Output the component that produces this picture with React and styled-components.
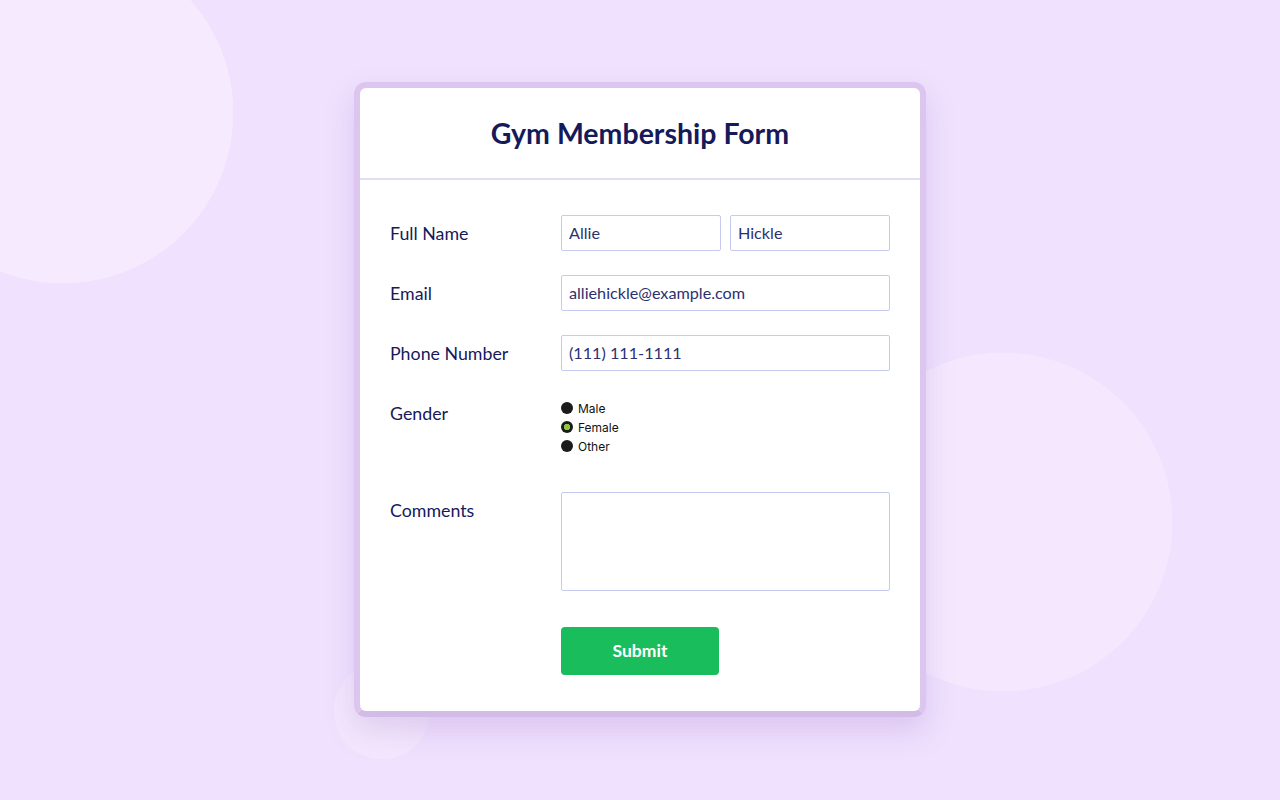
import styled, { createGlobalStyle } from 'styled-components';
import { useState } from 'react';

const GlobalStyle = createGlobalStyle`
    * {
        box-sizing: border-box;
    }

    body {
        margin: 0;
        font-family: "Lato", "Liberation Sans", sans-serif;
        background-color: #f0e1fe;
    }
`

const App = () => {
    const [form, setForm] = useState({
        first: 'Allie',
        last: 'Hickle',
        email: 'alliehickle@example.com',
        phone: '(111) 111-1111',
        gender: 'Female',
        comments: '',
    });

    const update = (key) => (e) => setForm({ ...form, [key]: e.target.value });

    return (
        <Page>
            <GlobalStyle />
            <Card>
                <Header>
                    <h1>Gym Membership Form</h1>
                </Header>
                <Form onSubmit={(e) => e.preventDefault()}>
                    <Label>Full Name</Label>
                    <Pair>
                        <Input value={form.first} onChange={update('first')} />
                        <Input value={form.last} onChange={update('last')} />
                    </Pair>

                    <Label>Email</Label>
                    <Input value={form.email} onChange={update('email')} />

                    <Label>Phone Number</Label>
                    <Input value={form.phone} onChange={update('phone')} />

                    <Label>Gender</Label>
                    <Radios>
                        {['Male', 'Female', 'Other'].map((g) => (
                            <RadioRow key={g}>
                                <Radio
                                    type="radio"
                                    name="gender"
                                    value={g}
                                    checked={form.gender === g}
                                    onChange={update('gender')}
                                />
                                {g}
                            </RadioRow>
                        ))}
                    </Radios>

                    <Label>Comments</Label>
                    <TextArea value={form.comments} onChange={update('comments')} />

                    <span />
                    <Submit type="submit">Submit</Submit>
                </Form>
            </Card>
        </Page>
    );
};

export default App;

const Page = styled.div`
    display: flex;
    align-items: center;
    justify-content: center;
    min-height: 100vh;
    padding-bottom: 2px;
    background:
        radial-gradient(circle at 382px 711px, #f6ecfd 0, #f3e6fd 48px, transparent 48.5px),
        radial-gradient(circle at 1003px 522px, #f5e8fe 169px, transparent 169.5px),
        radial-gradient(circle at 63px 113px, #f6eafe 170px, transparent 170.5px),
        #f0e1fe;
`

const Card = styled.div`
    width: 572px;
    background-color: #fff;
    border: 6px solid #dcc6f0;
    border-bottom-color: #d3bbe8;
    border-radius: 12px;
    box-shadow: 0 14px 28px rgba(160, 120, 200, 0.25);
    overflow: hidden;
`

const Header = styled.div`
    display: flex;
    align-items: center;
    justify-content: center;
    height: 92px;
    border-bottom: 2px solid #e0e0f4;

    h1 {
        margin: 0;
        font-size: 28.5px;
        font-weight: 700;
        color: #141a5a;
    }
`

const Form = styled.form`
    display: grid;
    grid-template-columns: 171px 1fr;
    row-gap: 24px;
    padding: 35px 30px 36px;
    align-items: start;
`

const Label = styled.label`
    line-height: 36px;
    font-size: 17.8px;
    color: #16195c;
`

const Pair = styled.div`
    display: grid;
    grid-template-columns: 1fr 1fr;
    gap: 9px;
`

const Input = styled.input`
    width: 100%;
    height: 36px;
    padding: 0 7px;
    border: 1px solid #c6caf0;
    border-radius: 2px;
    font-family: inherit;
    font-size: 16.2px;
    color: #2c316e;
    outline: none;
`

const Radios = styled.div`
    display: flex;
    flex-direction: column;
    padding: 4px 0 12px;
`

const RadioRow = styled.label`
    display: flex;
    align-items: center;
    gap: 5px;
    height: 19px;
    font-family: "Inter", "Liberation Sans", sans-serif;
    font-size: 12px;
    color: #111;
`

const Radio = styled.input`
    appearance: none;
    width: 12px;
    height: 12px;
    margin: 0;
    border-radius: 50%;
    background-color: #1b1b1b;

    &:checked {
        background: radial-gradient(circle, #8dc63f 0, #8dc63f 3px, #1b1b1b 3.5px);
    }
`

const TextArea = styled.textarea`
    width: 100%;
    height: 99px;
    border: 1px solid #c6caf0;
    border-radius: 2px;
    resize: none;
    font-family: inherit;
    font-size: 16px;
    outline: none;
`

const Submit = styled.button`
    width: 158px;
    height: 48px;
    margin-top: 12px;
    border: none;
    border-radius: 4px;
    background-color: #1abd5c;
    color: #fff;
    font-family: inherit;
    font-size: 17.5px;
    font-weight: 700;
    cursor: pointer;
`
